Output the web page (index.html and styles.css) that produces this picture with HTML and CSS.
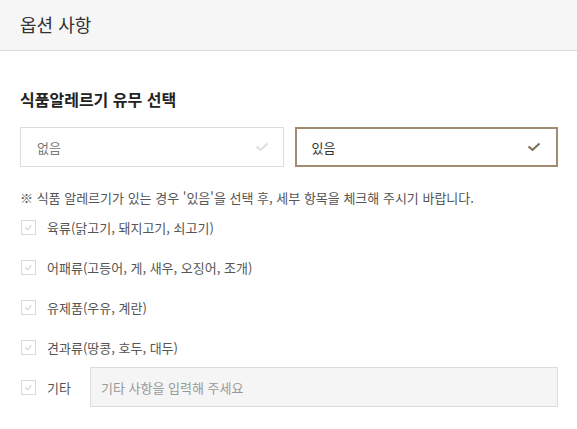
FILE: index.html
```html
<!DOCTYPE html>
<html lang="ko">
<head>
<meta charset="utf-8">
<title>옵션 사항</title>
<link rel="stylesheet" href="styles.css">
</head>
<body>
<div class="header">옵션 사항</div>
<div class="content">
  <h2 class="section-title">식품알레르기 유무 선택</h2>
  <div class="choice-row">
    <div class="choice">
      <span class="choice-text">없음</span>
      <svg class="choice-check" width="14" height="10" viewBox="0 0 14 10"><path d="M1.5 4.5 L5.5 8 L12.5 1.5" fill="none" stroke="currentColor" stroke-width="2"/></svg>
    </div>
    <div class="choice selected">
      <span class="choice-text">있음</span>
      <svg class="choice-check" width="14" height="10" viewBox="0 0 14 10"><path d="M1.5 4.5 L5.5 8 L12.5 1.5" fill="none" stroke="currentColor" stroke-width="2"/></svg>
    </div>
  </div>
  <p class="notice">※ 식품 알레르기가 있는 경우 '있음'을 선택 후, 세부 항목을 체크해 주시기 바랍니다.</p>
  <ul class="items">
    <li class="item"><span class="cb"><svg width="15" height="15" viewBox="0 0 15 15"><path d="M4 7.5 L6.5 10 L11 5" fill="none" stroke="currentColor" stroke-width="1.4"/></svg></span><span class="label">육류(닭고기, 돼지고기, 쇠고기)</span></li>
    <li class="item"><span class="cb"><svg width="15" height="15" viewBox="0 0 15 15"><path d="M4 7.5 L6.5 10 L11 5" fill="none" stroke="currentColor" stroke-width="1.4"/></svg></span><span class="label">어패류(고등어, 게, 새우, 오징어, 조개)</span></li>
    <li class="item"><span class="cb"><svg width="15" height="15" viewBox="0 0 15 15"><path d="M4 7.5 L6.5 10 L11 5" fill="none" stroke="currentColor" stroke-width="1.4"/></svg></span><span class="label">유제품(우유, 계란)</span></li>
    <li class="item"><span class="cb"><svg width="15" height="15" viewBox="0 0 15 15"><path d="M4 7.5 L6.5 10 L11 5" fill="none" stroke="currentColor" stroke-width="1.4"/></svg></span><span class="label">견과류(땅콩, 호두, 대두)</span></li>
    <li class="item"><span class="cb"><svg width="15" height="15" viewBox="0 0 15 15"><path d="M4 7.5 L6.5 10 L11 5" fill="none" stroke="currentColor" stroke-width="1.4"/></svg></span><span class="label label-etc">기타</span><input class="etc-input" type="text" placeholder="기타 사항을 입력해 주세요"></li>
  </ul>
</div>
</body>
</html>
```
FILE: styles.css
```css
* { box-sizing: border-box; }
html, body { margin: 0; padding: 0; background: #fff; }
body {
  font-family: "Noto Sans CJK KR", "Noto Sans", sans-serif;
  color: #333;
}
.header {
  height: 51px;
  background: #f6f6f6;
  border-bottom: 1px solid #dcdcdc;
  padding-left: 20px;
  display: flex;
  align-items: center;
  font-size: 18px;
  color: #333;
  padding-bottom: 2px;
}
.content { padding: 0 19px 0 20px; }
.section-title {
  margin: 38px 0 0;
  font-size: 16px;
  line-height: 20px;
  font-weight: 700;
  color: #222;
}
.choice-row {
  margin-top: 18px;
  display: grid;
  grid-template-columns: 1fr 1fr;
  gap: 11px;
}
.choice {
  height: 40px;
  border: 1px solid #dcdcdc;
  display: flex;
  align-items: center;
  justify-content: space-between;
  padding: 0 14px 0 16px;
  font-size: 13px;
  color: #777;
}
.choice .choice-check { color: #dedede; }
.choice.selected {
  border: 2px solid #a38b72;
  padding: 0 15px 0 15px;
  color: #333;
}
.choice.selected .choice-check { color: #7b6a58; }
.notice {
  margin: 22px 0 0;
  font-size: 13px;
  line-height: 18px;
  color: #555;
}
.items { list-style: none; margin: 0; padding: 0; }
.item {
  height: 40px;
  display: flex;
  align-items: center;
}
.cb {
  width: 15px;
  height: 15px;
  border: 1px solid #dadada;
  background: #fff;
  color: #d6d6d6;
  display: flex;
  align-items: center;
  justify-content: center;
  flex: none;
  margin-left: 1px;
}
.cb svg { display: block; }
.label {
  margin-left: 11px;
  font-size: 13px;
  color: #555;
}
.label-etc { width: 43px; flex: none; }
.etc-input {
  flex: 1;
  height: 40px;
  margin-left: 0;
  border: 1px solid #dcdcdc;
  background: #f5f5f5;
  padding: 0 10px;
  font-family: inherit;
  font-size: 13px;
  color: #333;
  outline: none;
}
.etc-input::placeholder { color: #999; }
```
